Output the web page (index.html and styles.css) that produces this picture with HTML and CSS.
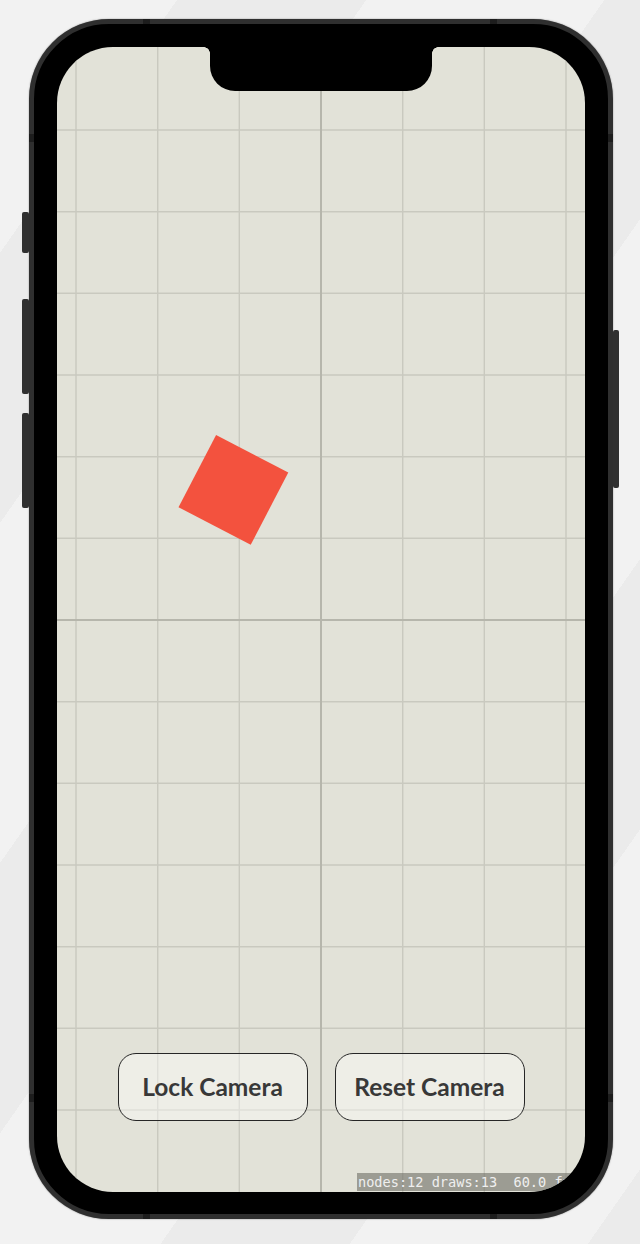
FILE: index.html
```html
<!DOCTYPE html>
<html lang="en">
<head>
<meta charset="utf-8">
<title>Camera Demo</title>
<link rel="stylesheet" href="styles.css">
</head>
<body>
<div class="page">
  <div class="phone">
    <span class="side-btn btn-mute"></span>
    <span class="side-btn btn-vol-up"></span>
    <span class="side-btn btn-vol-down"></span>
    <span class="side-btn btn-power"></span>
    <span class="band band-top-l"></span>
    <span class="band band-top-r"></span>
    <span class="band band-bot-l"></span>
    <span class="band band-bot-r"></span>
    <span class="band band-left-t"></span>
    <span class="band band-right-t"></span>
    <span class="band band-left-b"></span>
    <span class="band band-right-b"></span>
    <div class="screen">
      <svg class="scene" width="528" height="1145" viewBox="0 0 528 1145">
        <g class="grid">
          <line x1="19" y1="0" x2="19" y2="1145"/>
          <line x1="100.7" y1="0" x2="100.7" y2="1145"/>
          <line x1="182.3" y1="0" x2="182.3" y2="1145"/>
          <line x1="345.7" y1="0" x2="345.7" y2="1145"/>
          <line x1="427.3" y1="0" x2="427.3" y2="1145"/>
          <line x1="509" y1="0" x2="509" y2="1145"/>
          <line x1="0" y1="83" x2="528" y2="83"/>
          <line x1="0" y1="164.7" x2="528" y2="164.7"/>
          <line x1="0" y1="246.3" x2="528" y2="246.3"/>
          <line x1="0" y1="328" x2="528" y2="328"/>
          <line x1="0" y1="409.7" x2="528" y2="409.7"/>
          <line x1="0" y1="491.3" x2="528" y2="491.3"/>
          <line x1="0" y1="654.7" x2="528" y2="654.7"/>
          <line x1="0" y1="736.3" x2="528" y2="736.3"/>
          <line x1="0" y1="818" x2="528" y2="818"/>
          <line x1="0" y1="899.7" x2="528" y2="899.7"/>
          <line x1="0" y1="981.3" x2="528" y2="981.3"/>
          <line x1="0" y1="1063" x2="528" y2="1063"/>
        </g>
        <g class="axes">
          <line x1="264" y1="0" x2="264" y2="1145"/>
          <line x1="0" y1="573" x2="528" y2="573"/>
        </g>
        <rect class="box" x="-40.7" y="-40.7" width="81.4" height="81.4" transform="translate(176.4 442.9) rotate(27.5)"/>
      </svg>
      <div class="notch"></div>
      <div class="controls">
        <button class="cam-btn" type="button">Lock Camera</button>
        <button class="cam-btn" type="button">Reset Camera</button>
      </div>
      <div class="stats">nodes:12 draws:13  60.0 fps</div>
    </div>
  </div>
</div>
</body>
</html>
```
FILE: styles.css
```css
html, body {
  margin: 0;
  padding: 0;
}

body {
  width: 640px;
  height: 1244px;
  overflow: hidden;
  background: repeating-linear-gradient(125deg,
    #f2f2f2 0px, #f2f2f2 145px,
    #ebebeb 145px, #ebebeb 300px,
    #f2f2f2 300px, #f2f2f2 350px);
  font-family: Lato, "Open Sans", sans-serif;
}

.page {
  display: flex;
  align-items: flex-start;
  padding: 19px 0 0 29px;
}

.phone {
  position: relative;
  width: 584px;
  height: 1200px;
  box-sizing: border-box;
  padding: 22px 22px 21px 22px;
  background: #000;
  border: 5px solid #2f2f2f;
  border-radius: 80px;
  box-shadow: 0 0 1.5px rgba(0, 0, 0, 0.5);
}

.phone {
  padding: 23px 23px 22px 23px;
}

.side-btn {
  position: absolute;
  background: #303030;
  border-radius: 2px;
}

.btn-mute {
  left: -12px;
  top: 188px;
  width: 7px;
  height: 41px;
}

.btn-vol-up {
  left: -12px;
  top: 275px;
  width: 7px;
  height: 95px;
}

.btn-vol-down {
  left: -12px;
  top: 389px;
  width: 7px;
  height: 95px;
}

.btn-power {
  right: -11px;
  top: 306px;
  width: 6px;
  height: 158px;
}

.band {
  position: absolute;
  background: #1d1d1d;
}

.band-top-l, .band-top-r {
  top: -5px;
  width: 7px;
  height: 5px;
}

.band-bot-l, .band-bot-r {
  bottom: -5px;
  width: 7px;
  height: 5px;
}

.band-top-l, .band-bot-l { left: 109px; }
.band-top-r, .band-bot-r { left: 456px; }

.band-left-t, .band-right-t, .band-left-b, .band-right-b {
  width: 5px;
  height: 8px;
}

.band-left-t, .band-left-b { left: -5px; }
.band-right-t, .band-right-b { right: -5px; }
.band-left-t, .band-right-t { top: 110px; }
.band-left-b, .band-right-b { top: 1070px; }

.screen {
  position: relative;
  width: 528px;
  height: 1145px;
  overflow: hidden;
  border-radius: 56px;
  background: #e2e2d8;
}

.scene {
  display: block;
}

.grid line {
  stroke: #c9c9bf;
  stroke-width: 1.4;
}

.axes line {
  stroke: #b6b6ac;
  stroke-width: 2;
}

.box {
  fill: #f3523e;
}

.notch {
  position: absolute;
  top: 0;
  left: 153px;
  width: 222px;
  height: 44px;
  background: #000;
  border-radius: 0 0 25px 25px;
}

.notch::before,
.notch::after {
  content: "";
  position: absolute;
  top: 0;
  width: 6px;
  height: 6px;
}

.notch::before {
  left: -6px;
  background: radial-gradient(circle at 0 100%, transparent 5.5px, #000 6px);
}

.notch::after {
  right: -6px;
  background: radial-gradient(circle at 100% 100%, transparent 5.5px, #000 6px);
}

.controls {
  position: absolute;
  left: 0;
  right: 0;
  bottom: 71px;
  display: flex;
  justify-content: center;
  gap: 27px;
}

.cam-btn {
  width: 190px;
  height: 68px;
  box-sizing: border-box;
  margin: 0;
  padding: 0;
  border: 1.3px solid #262626;
  border-radius: 18px;
  background: rgba(255, 255, 252, 0.42);
  color: #383838;
  font-family: Lato, "Open Sans", sans-serif;
  font-weight: 700;
  font-size: 24.5px;
  line-height: 1;
  cursor: pointer;
}

.stats {
  position: absolute;
  left: 300px;
  right: 0;
  bottom: 1px;
  height: 18px;
  padding-left: 1px;
  background: rgba(110, 110, 102, 0.6);
  color: #efefef;
  font-family: "DejaVu Sans Mono", "Liberation Mono", monospace;
  font-size: 13.6px;
  line-height: 18px;
  white-space: pre;
}
```
